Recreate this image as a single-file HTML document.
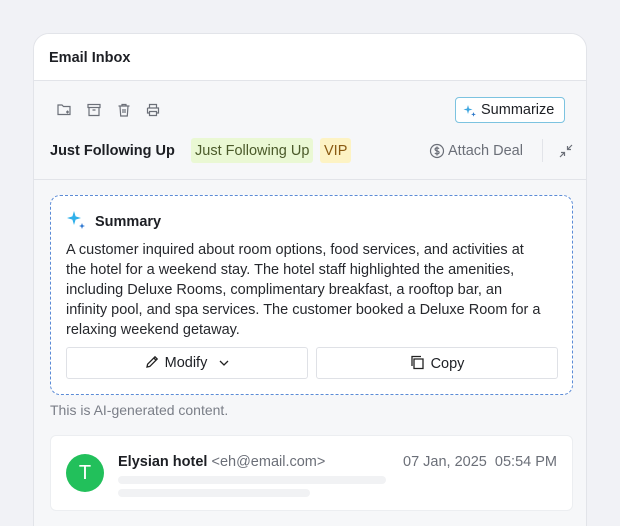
<!DOCTYPE html>
<html><head><meta charset="utf-8"><style>
*{box-sizing:border-box;margin:0;padding:0}
html,body{width:620px;height:526px;overflow:hidden}
body{background:#f1f2f6;font-family:"Liberation Sans",sans-serif;color:#1d1f24;position:relative}
.card{position:absolute;left:33px;top:33px;width:554px;height:510px;background:#f6f7f9;border:1px solid #e2e4e9;border-radius:16px;overflow:hidden}
.hdr{height:47px;background:#fff;border-bottom:1px solid #e2e4e9;padding:16px 15px;font-weight:bold;font-size:14.5px}
.abs{position:absolute}
.ico{position:absolute;top:68px}
.sumbtn{position:absolute;left:421px;top:63px;width:110px;height:26px;border:1.5px solid #7cc3e0;border-radius:4px;background:#fff;font-size:14.5px;padding:4px 0 0 25px}
.row2{position:absolute;top:109px;font-size:14.5px}
.tag{position:absolute;top:104px;height:25px;padding:5px 4px;font-size:14.5px;border-radius:3px}
.sep{position:absolute;left:0;right:0;top:145px;border-top:1px solid #e2e4e9}
.sum{position:absolute;left:16px;top:161px;width:523px;height:200px;background:#fff;border:1.5px dashed #5b8bd6;border-radius:10px}
.txt{position:absolute;left:15px;top:44px;width:500px;font-size:14.5px;line-height:20px;color:#26282d;white-space:nowrap}
.btn{position:absolute;top:151px;height:32px;border:1px solid #dfe1e6;border-radius:3px;background:#fff;font-size:14.5px;text-align:center;padding-top:7px}
.mail{position:absolute;left:16px;top:401px;width:523px;height:76px;background:#fff;border-radius:6px;border:1px solid #eceef1}
</style></head><body>
<div class="card">
<div class="hdr">Email Inbox</div>
<svg class="ico" style="left:22px" width="16" height="16" viewBox="0 0 16 16" fill="none" stroke="#6b6f78" stroke-width="1.2"><path d="M2 3h4l1.5 1.5H14v8H2z M10 10h3 M11.5 8.5v3"/></svg>
<svg class="ico" style="left:52px" width="16" height="16" viewBox="0 0 16 16" fill="none" stroke="#6b6f78" stroke-width="1.2"><rect x="2" y="2.5" width="12" height="3"/><path d="M3 5.5v8h10v-8 M6.5 8h3"/></svg>
<svg class="ico" style="left:82px" width="16" height="16" viewBox="0 0 16 16" fill="none" stroke="#6b6f78" stroke-width="1.2"><path d="M2.5 4h11 M6 4V2.5h4V4 M4 4l.7 10h6.6L12 4 M7 7v4 M9 7v4"/></svg>
<svg class="ico" style="left:111px" width="16" height="16" viewBox="0 0 16 16" fill="none" stroke="#6b6f78" stroke-width="1.2"><path d="M4.5 6V2.5h7V6 M2.5 6h11v5h-2 M4.5 11h-2V6 M4.5 9.5h7v4h-7z"/></svg>
<div class="sumbtn"><svg class="abs" style="left:7px;top:6px" width="14" height="14" viewBox="0 0 14 14"><path d="M5 1l1 3.5 3.5 1-3.5 1L5 10 4 6.5.5 5.5 4 4.5z" fill="#3fa7e0"/><path d="M10.5 8l.6 1.8 1.8.6-1.8.6-.6 1.8-.6-1.8-1.8-.6 1.8-.6z" fill="#2b77c9"/></svg>Summarize</div>
<div class="row2" style="left:16px;font-weight:bold">Just Following Up</div>
<div class="tag" style="left:157px;background:#eaf8d4;color:#4b5a2a">Just Following Up</div>
<div class="tag" style="left:286px;background:#fdf3c4;color:#8a5a12">VIP</div>
<svg class="abs" style="left:395px;top:109px" width="16" height="16" viewBox="0 0 16 16" fill="none" stroke="#6b6f78" stroke-width="1.2"><circle cx="8" cy="8" r="6.5"/><path d="M10 5.8c-.4-.6-1.1-.9-2-.9-1.1 0-1.900.6-1.900 1.5 0 2 4 1 4 3 0 .9-.9 1.5-2.100 1.5-.9 0-1.700-.4-2.100-1 M8 3.5v9"/></svg>
<div class="row2" style="left:414px;color:#6b6f78">Attach Deal</div>
<div class="abs" style="left:508px;top:105px;height:23px;border-left:1px solid #e2e4e9"></div>
<svg class="abs" style="left:524px;top:109px" width="16" height="16" viewBox="0 0 16 16" fill="none" stroke="#6b6f78" stroke-width="1.2"><path d="M14 2l-4.5 4.5 M9.5 3v3.5H13 M2 14l4.5-4.5 M3 9.5h3.5V13"/></svg>
<div class="sep"></div>
<div class="sum">
<svg class="abs" style="left:15px;top:14px" width="22" height="22" viewBox="0 0 22 22"><path d="M8 1l1.6 5.4L15 8l-5.4 1.6L8 15 6.4 9.6 1 8l5.4-1.6z" fill="#2fb0ea"/><path d="M16 13l.8 2.2 2.2.8-2.2.8L16 19l-.8-2.2L13 16l2.2-.8z" fill="#2a74d0"/></svg>
<div class="abs" style="left:44px;top:18px;font-weight:bold;font-size:14.5px">Summary</div>
<div class="txt">A customer inquired about room options, food services, and activities at<br>the hotel for a weekend stay. The hotel staff highlighted the amenities,<br>including Deluxe Rooms, complimentary breakfast, a rooftop bar, an<br>infinity pool, and spa services. The customer booked a Deluxe Room for a<br>relaxing weekend getaway.</div>
<div class="btn" style="left:15px;width:242px"><svg style="vertical-align:-2px;margin-right:6px" width="14" height="14" viewBox="0 0 14 14" fill="none" stroke="#222" stroke-width="1.3"><path d="M2 12l.6-2.8L10 1.8 12.2 4 4.8 11.4z M8.8 3l2.2 2.2"/></svg>Modify <svg style="margin-left:8px;vertical-align:1px" width="10" height="6" viewBox="0 0 10 6" fill="none" stroke="#222" stroke-width="1.3"><path d="M1 1l4 4 4-4"/></svg></div>
<div class="btn" style="left:265px;width:242px"><svg style="vertical-align:-2px;margin-right:6px" width="15" height="15" viewBox="0 0 15 15" fill="none" stroke="#222" stroke-width="1.3"><path d="M4 4h9v9.5H4z M2 11V1.5h9"/></svg>Copy</div>
</div>
<div class="abs" style="left:16px;top:368px;font-size:14px;color:#7a7e87">This is AI-generated content.</div>
<div class="mail">
<div class="abs" style="left:15px;top:18px;width:38px;height:38px;border-radius:50%;background:#22c05b;color:#fff;font-size:20px;text-align:center;line-height:38px">T</div>
<div class="abs" style="left:67px;top:18px;font-size:14.5px"><b style="color:#1d1f24">Elysian hotel</b> <span style="color:#6b6f78">&lt;eh@email.com&gt;</span></div>
<div class="abs" style="right:15px;top:18px;font-size:14.5px;color:#6b6f78">07 Jan, 2025&nbsp; 05:54 PM</div>
<div class="abs" style="left:67px;top:40px;width:268px;height:8px;border-radius:4px;background:#f1f2f4"></div>
<div class="abs" style="left:67px;top:53px;width:192px;height:8px;border-radius:4px;background:#f1f2f4"></div>
</div>
</div>
</body></html>
